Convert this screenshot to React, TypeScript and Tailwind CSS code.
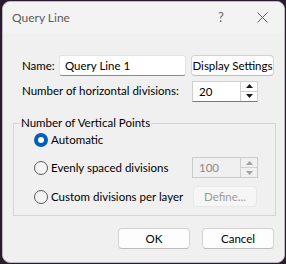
import React from 'react';

const font = { fontFamily: 'Lato, "Segoe UI", sans-serif' };

const Radio = ({ checked, label }: { checked?: boolean; label: string }) => (
  <div className="flex items-center gap-[3px] whitespace-nowrap">
    {checked ? (
      <span className="w-[14px] h-[14px] rounded-full bg-[#005fb8] flex items-center justify-center">
        <span className="w-[6px] h-[6px] rounded-full bg-white" />
      </span>
    ) : (
      <span className="w-[14px] h-[14px] rounded-full border border-[#5a5a5a] bg-[#f3f3f3]" />
    )}
    <span className="text-[11.5px] text-black">{label}</span>
  </div>
);

const SpinBox = ({ value, disabled }: { value: string; disabled?: boolean }) => (
  <div
    className={`flex w-[66px] h-[21px] border ${
      disabled ? 'border-[#cccccc] bg-[#f0f0f0]' : 'border-[#d0d0d0] bg-white border-b-[#7a7a7a]'
    }`}
  >
    <div className={`flex-1 pl-[6px] text-[11.5px] leading-[19px] ${disabled ? 'text-[#8a8a8a]' : 'text-black'}`}>
      {value}
    </div>
    <div className="w-[17px] flex flex-col border-l border-[#d0d0d0]">
      <div className="flex-1 flex items-center justify-center border-b border-[#d0d0d0]">
        <svg width="7" height="4" viewBox="0 0 7 4">
          <path d="M0 4 L3.5 0 L7 4 Z" fill={disabled ? '#a0a0a0' : '#1a1a1a'} />
        </svg>
      </div>
      <div className="flex-1 flex items-center justify-center">
        <svg width="7" height="4" viewBox="0 0 7 4">
          <path d="M0 0 L3.5 4 L7 0 Z" fill={disabled ? '#a0a0a0' : '#1a1a1a'} />
        </svg>
      </div>
    </div>
  </div>
);

const Button = ({ children, className = '' }: { children: React.ReactNode; className?: string }) => (
  <button
    className={`h-[21px] rounded-[4px] border border-[#d3d3d3] border-b-[#bcbcbc] bg-[#fdfdfd] text-[11.5px] text-black leading-none whitespace-nowrap ${className}`}
  >
    {children}
  </button>
);

export default function App() {
  return (
    <div className="w-[286px] h-[264px] bg-[#2b1b2e] pl-[2px] pt-[1px] overflow-hidden font-normal" style={font}>
      <div className="w-[283px] h-[262px] rounded-[8px] border border-[#b9b9b9] bg-[#f0f0f0] overflow-hidden flex flex-col">
        <div className="h-[31px] bg-[#f3f3f3] flex items-center pl-[9px] shrink-0">
          <span className="text-[12px] text-[#5c5c5c] flex-1">Query Line</span>
          <span className="text-[13px] text-[#6a6a6a] w-[20px] mr-[26px] text-center">?</span>
          <svg width="11" height="11" viewBox="0 0 11 11" className="mr-[16px]">
            <path d="M0.5 0.5 L10.5 10.5 M10.5 0.5 L0.5 10.5" stroke="#5c5c5c" strokeWidth="1" />
          </svg>
        </div>

        <div className="flex-1 flex flex-col pt-[22px] px-[9px]">
          <div className="flex items-center h-[21px]">
            <span className="text-[11.5px] text-black ml-[10px] w-[37px]">Name:</span>
            <div className="w-[127px] h-[21px] bg-white border border-[#e3e3e3] border-b-[#8a8a8a] rounded-[3px] pl-[5px] text-[11.5px] leading-[19px] text-black">
              Query Line 1
            </div>
            <Button className="ml-[5px] w-[83px]">Display Settings</Button>
          </div>

          <div className="flex items-center h-[20px] mt-[5px]">
            <span className="text-[11.5px] text-black ml-[10px] w-[170px] whitespace-nowrap">Number of horizontal divisions:</span>
            <SpinBox value="20" />
          </div>

          <div className="relative mt-[22px] ml-[1px] w-[263px] h-[93px] border border-[#d5d5d5]">
            <span className="absolute left-[6px] top-[-9px] px-[1px] bg-[#f0f0f0] text-[11.5px] text-black leading-[16px] whitespace-nowrap">
              Number of Vertical Points
            </span>
            <div className="flex flex-col pl-[20px] pt-[7px]">
              <Radio checked label="Automatic" />
              <div className="flex items-center justify-between mt-[9px] pr-[17px] h-[21px]">
                <Radio label="Evenly spaced divisions" />
                <SpinBox value="100" disabled />
              </div>
              <div className="flex items-center justify-between mt-[8px] pr-[18px] h-[21px]">
                <Radio label="Custom divisions per layer" />
                <div className="w-[64px] h-[21px] rounded-[4px] border border-[#e8e8e8] bg-[#f6f6f6] text-[11.5px] text-[#9a9a9a] flex items-center justify-center">
                  Define...
                </div>
              </div>
            </div>
          </div>

          <div className="flex justify-end gap-[12px] mt-[12px] pr-[1px]">
            <Button className="w-[72px]">OK</Button>
            <Button className="w-[72px]">Cancel</Button>
          </div>
        </div>
      </div>
    </div>
  );
}
